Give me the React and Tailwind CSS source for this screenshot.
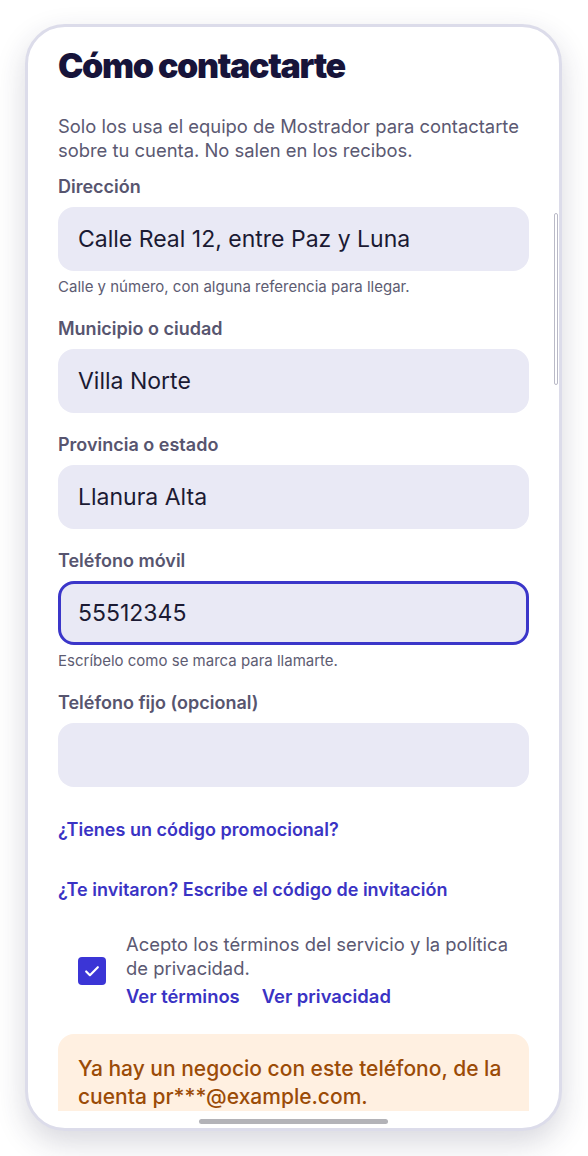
import React from 'react';

const font = { fontFamily: 'Inter, "Noto Sans", sans-serif' };

function Field({ label, value, hint, focused }) {
  return (
    <div className="flex flex-col">
      <label className="text-[18px] font-semibold text-[#57556f] leading-[22px] mb-[9px]">{label}</label>
      <div
        className={
          focused
            ? 'h-[64px] rounded-[16px] bg-[#e9e9f5] border-[3px] border-[#3b36c9] flex items-center px-[17px]'
            : 'h-[64px] rounded-[16px] bg-[#e9e9f5] flex items-center px-[20px]'
        }
      >
        <span className="text-[23px] text-[#1b1a33]">{value}</span>
      </div>
      {hint ? <p className="text-[15px] text-[#5d5c72] mt-[6px] leading-[20px]">{hint}</p> : null}
    </div>
  );
}

export default function App() {
  return (
    <div className="w-[588px] h-[1156px] bg-white pt-[24px] pl-[25px]" style={font}>
      <div className="w-[537px] h-[1107px] rounded-[40px] border-[3px] border-[#dcdcea] bg-white overflow-hidden flex flex-col shadow-[0_12px_30px_rgba(40,40,70,0.18)]">
        <div className="flex-1 overflow-hidden relative px-[30px] pt-[19px]">
          <h1 className="text-[34px] font-black tracking-[-0.04em] text-[#17143a] leading-[40px]">Cómo contactarte</h1>
          <p className="text-[18.4px] text-[#5b5972] leading-[24px] mt-[28px]">
            Solo los usa el equipo de Mostrador para contactarte sobre tu cuenta. No salen en los recibos.
          </p>
          <div className="flex flex-col gap-[21px] mt-[14px]">
            <Field label="Dirección" value="Calle Real 12, entre Paz y Luna" hint="Calle y número, con alguna referencia para llegar." />
            <Field label="Municipio o ciudad" value="Villa Norte" />
            <Field label="Provincia o estado" value="Llanura Alta" />
            <Field label="Teléfono móvil" value="55512345" hint="Escríbelo como se marca para llamarte." focused />
            <Field label="Teléfono fijo (opcional)" value="" />
          </div>
          <div className="mt-[32px] text-[18px] leading-[22px] font-semibold text-[#3a33c4]">¿Tienes un código promocional?</div>
          <div className="mt-[38px] text-[18px] leading-[22px] font-semibold text-[#3a33c4]">¿Te invitaron? Escribe el código de invitación</div>
          <div className="flex items-center gap-[20px] mt-[31px] pl-[20px]">
            <div className="w-[28px] h-[28px] rounded-[4px] bg-[#3b35d6] flex items-center justify-center shrink-0">
              <svg width="20" height="20" viewBox="0 0 24 24" fill="none" stroke="white" strokeWidth="2.6" strokeLinecap="round" strokeLinejoin="round">
                <path d="M5 12.5l4.5 4.5L19 7.5" />
              </svg>
            </div>
            <div className="flex flex-col w-[395px]">
              <p className="text-[18.4px] text-[#5b5972] leading-[24px]">Acepto los términos del servicio y la política de privacidad.</p>
              <div className="flex gap-[22px] text-[18.4px] font-semibold text-[#3a33c4] leading-[28px] mt-[2px]">
                <span>Ver términos</span>
                <span>Ver privacidad</span>
              </div>
            </div>
          </div>
          <div className="mt-[24px] rounded-[16px] bg-[#fff0e1] px-[20px] pt-[21px] pb-[20px]">
            <p className="text-[21px] font-medium text-[#9b4b07] leading-[28px]">
              Ya hay un negocio con este teléfono, de la cuenta pr***@example.com.
            </p>
          </div>
          <div className="absolute right-[1px] top-[186px] w-[4px] h-[172px] rounded-full border border-[#b9b9c6]" />
        </div>
        <div className="h-[17px] shrink-0 flex justify-center pt-[8px]">
          <div className="w-[189px] h-[5px] rounded-full bg-[#b3b3b8]" />
        </div>
      </div>
    </div>
  );
}
